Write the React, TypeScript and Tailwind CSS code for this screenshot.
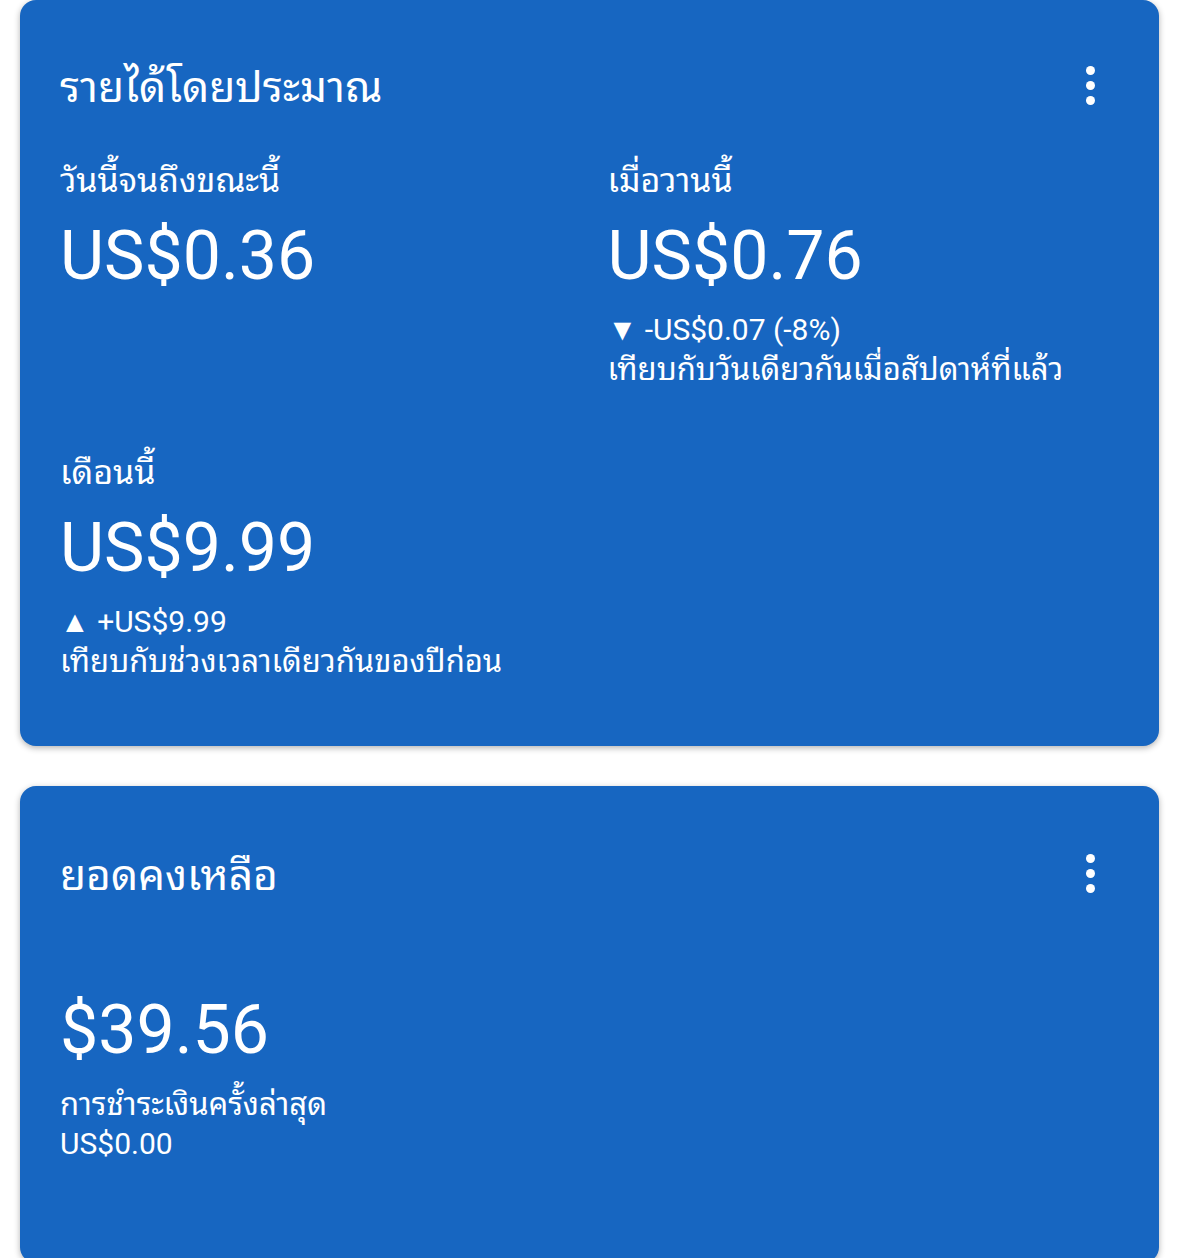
function Kebab() {
  return (
    <div className="flex flex-col items-center gap-[6px] pb-[6px]">
      <span className="block h-[9px] w-[9px] rounded-full bg-white" />
      <span className="block h-[9px] w-[9px] rounded-full bg-white" />
      <span className="block h-[9px] w-[9px] rounded-full bg-white" />
    </div>
  );
}

function Metric({
  label,
  value,
  delta,
  compare,
}: {
  label: string;
  value: string;
  delta?: string;
  compare?: string;
}) {
  return (
    <div>
      <div className="text-[34px] leading-[40px]">{label}</div>
      <div className="mt-[16px] text-[68px] leading-[80px]">{value}</div>
      {delta && <div className="mt-[14px] text-[30px] leading-[40px]">{delta}</div>}
      {compare && <div className="text-[31px] leading-[40px]">{compare}</div>}
    </div>
  );
}

export default function App() {
  return (
    <div className="min-h-[1258px] bg-white px-[20px] font-['Roboto','Noto_Sans_Thai_Looped','Noto_Sans',sans-serif] text-white">
      {/* Estimated earnings */}
      <section className="rounded-[16px] bg-[#1766c1] pt-[64px] pb-[64px] px-[40px] shadow-[0_2px_6px_rgba(0,0,0,0.3)]">
        <div className="flex items-center justify-between pr-[24px]">
          <h2 className="text-[42.5px] leading-[48px]">รายได้โดยประมาณ</h2>
          <Kebab />
        </div>
        <div className="mt-[48px] grid grid-cols-2 gap-x-[36px]">
          <Metric label="วันนี้จนถึงขณะนี้" value="US$0.36" />
          <Metric
            label="เมื่อวานนี้"
            value="US$0.76"
            delta="▼ -US$0.07 (-8%)"
            compare="เทียบกับวันเดียวกันเมื่อสัปดาห์ที่แล้ว"
          />
          <div className="mt-[62px]">
            <Metric
              label="เดือนนี้"
              value="US$9.99"
              delta="▲ +US$9.99"
              compare="เทียบกับช่วงเวลาเดียวกันของปีก่อน"
            />
          </div>
        </div>
      </section>

      {/* Balance */}
      <section className="mt-[40px] rounded-[16px] bg-[#1766c1] pt-[66px] pb-[100px] px-[40px] shadow-[0_2px_6px_rgba(0,0,0,0.3)]">
        <div className="flex items-center justify-between pr-[24px]">
          <h2 className="text-[42.5px] leading-[48px]">ยอดคงเหลือ</h2>
          <Kebab />
        </div>
        <div className="mt-[90px] text-[68px] leading-[80px]">$39.56</div>
        <div className="mt-[15px] text-[31px] leading-[40px]">การชำระเงินครั้งล่าสุด</div>
        <div className="text-[30px] leading-[38px]">US$0.00</div>
      </section>
    </div>
  );
}
